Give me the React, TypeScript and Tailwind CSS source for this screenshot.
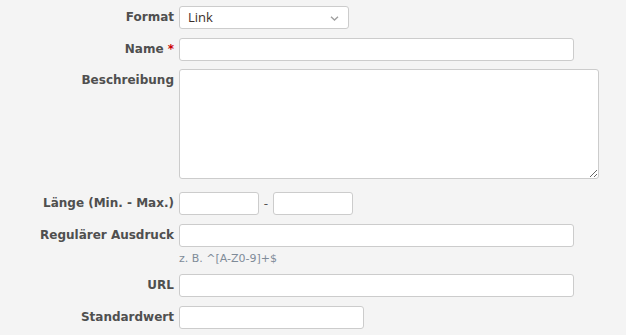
import React from "react";

const font = { fontFamily: '"DejaVu Sans", Verdana, sans-serif' };

function Label({ children }: { children: React.ReactNode }) {
  return (
    <div className="text-right font-bold text-[12px] leading-[23px] text-[#4f4f4f] whitespace-nowrap">
      {children}
    </div>
  );
}

const inputCls =
  "block h-[23px] bg-white border border-[#cccccc] rounded-[3px] outline-none px-2 text-[13px] text-[#333]";

export default function App() {
  return (
    <div className="w-[626px] h-[335px] bg-[#f4f4f4] overflow-hidden" style={font}>
      <div className="grid grid-cols-[174px_1fr] gap-x-[5px] pt-[6px] items-start">
        <Label>Format</Label>
        <div className="relative w-[170px] h-[23px] bg-white border border-[#cccccc] rounded-[3px] flex items-center pl-2 text-[13px] text-[#3a2f2a]">
          <span style={{ fontFamily: '"Open Sans", "DejaVu Sans", sans-serif' }}>Link</span>
          <svg className="absolute right-[9px] top-[9px]" width="9" height="5" viewBox="0 0 9 5">
            <path d="M1 0.8 L4.5 4 L8 0.8" fill="none" stroke="#a0a0a0" strokeWidth="1.4" />
          </svg>
        </div>

        <div className="mt-[9px]">
          <Label>
            Name <span className="text-[#cc0000]">*</span>
          </Label>
        </div>
        <input className={`${inputCls} w-[395px] mt-[9px]`} />

        <div className="mt-[8px]">
          <Label>Beschreibung</Label>
        </div>
        <textarea className="block w-[420px] h-[110px] mt-[8px] bg-white border border-[#cccccc] rounded-[3px] outline-none p-2 text-[13px]" />

        <div className="mt-[13px]">
          <Label>Länge (Min. - Max.)</Label>
        </div>
        <div className="mt-[13px] flex items-center">
          <input className={`${inputCls} w-[80px]`} />
          <span className="w-[14px] text-center text-[12px] text-[#555]">-</span>
          <input className={`${inputCls} w-[80px]`} />
        </div>

        <div className="mt-[9px]">
          <Label>Regulärer Ausdruck</Label>
        </div>
        <div className="mt-[9px]">
          <input className={`${inputCls} w-[395px]`} />
          <div className="text-[11px] text-[#7f8b98] mt-[5px] leading-[14px]">z. B. ^[A-Z0-9]+$</div>
        </div>

        <div className="mt-[8px]">
          <Label>URL</Label>
        </div>
        <input className={`${inputCls} w-[395px] mt-[8px]`} />

        <div className="mt-[9px]">
          <Label>Standardwert</Label>
        </div>
        <input className={`${inputCls} w-[185px] mt-[9px]`} />
      </div>
    </div>
  );
}
